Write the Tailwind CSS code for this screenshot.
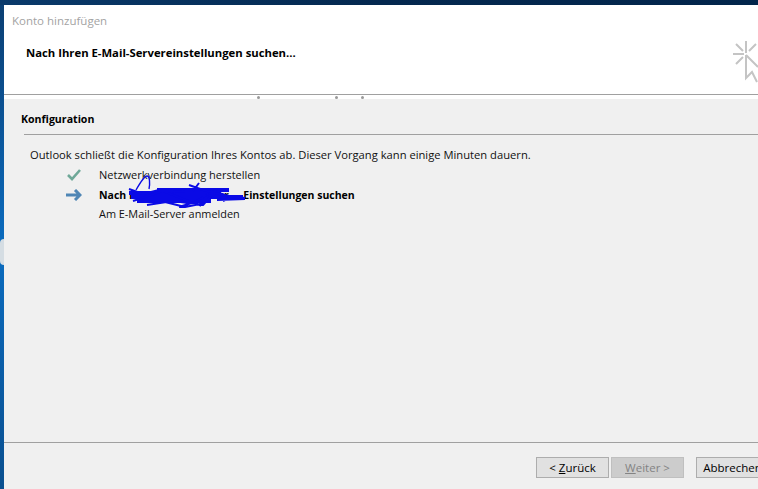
<!DOCTYPE html>
<html lang="de">
<head>
  <meta charset="UTF-8">
  <title>Konto hinzufügen</title>
  <script src="https://cdn.jsdelivr.net/npm/@tailwindcss/browser@4"></script>
</head>
<body class="w-[758px] h-[489px] overflow-hidden font-['Open_Sans','Noto_Sans',sans-serif] text-[11px] text-[#111] bg-[#0a6cc0]">
  <div class="h-[5px] bg-gradient-to-r from-[#0a3a6b] via-[#04284f] to-[#02254b]"></div>

  <div class="flex h-[484px]">
    <!-- desktop behind the window -->
    <div class="relative w-[4px] shrink-0 bg-gradient-to-b from-[#0b3f73] via-[#0a6cc0] to-[#0a4f8f]">
      <div class="absolute left-0 top-[234px] w-[4px] h-[26px] rounded-l-full bg-[#d5dde3]"></div>
    </div>

    <div class="w-[754px] flex flex-col">
      <!-- header -->
      <div class="relative h-[89px] bg-white">
        <div class="pl-[8px] pt-[9px] text-[11.5px] leading-[14px] text-[#a3a3a3]">Konto hinzufügen</div>
        <div class="pl-[22px] pt-[18px] text-[11.3px] leading-[14px] font-bold text-black">Nach Ihren E-Mail-Servereinstellungen suchen...</div>
        <svg class="absolute left-[728px] top-[36px]" width="26" height="48" viewBox="0 0 26 48" fill="none" stroke="#c4c4c4" stroke-width="2">
          <path d="M14 0v12M1 13h11M4 3l7 7M24 3l-7 7M4 23l7-7"/>
          <path d="M14 14v23l6-6 5 10M14 14l12 12" />
        </svg>
      </div>
      <div class="relative h-[5px] bg-white">
        <div class="h-[1px] bg-[#a0a0a0]"></div>
        <div class="absolute left-[253px] top-[2px] w-[3px] h-[3px] rounded-full bg-[#999]"></div>
        <div class="absolute left-[331px] top-[2px] w-[3px] h-[3px] rounded-full bg-[#999]"></div>
        <div class="absolute left-[357px] top-[2px] w-[3px] h-[3px] rounded-full bg-[#999]"></div>
      </div>

      <!-- content -->
      <div class="flex-1 bg-[#f0f0f0] flex flex-col">
        <div class="pl-[17px] pt-[13px] text-[10.6px] leading-[14px] font-bold text-black">Konfiguration</div>
        <div class="ml-[20px] mt-[8px] h-[1px] bg-[#a0a0a0]"></div>

        <div class="pl-[26px] pt-[13px] text-[11.2px] leading-[14px]">Outlook schließt die Konfiguration Ihres Kontos ab. Dieser Vorgang kann einige Minuten dauern.</div>

        <div class="relative mt-[3px] flex flex-col">
          <div class="flex items-center h-[20px]">
            <div class="w-[77px] shrink-0 flex justify-end">
              <svg width="14" height="12" viewBox="0 0 14 12" fill="none" stroke="#6fa898" stroke-width="2.6"><path d="M1 6l4 4 8-9"/></svg>
            </div>
            <div class="pl-[18px] leading-[14px]">Netzwerkverbindung herstellen</div>
          </div>
          <div class="flex items-center h-[19px]">
            <div class="w-[78px] shrink-0 flex justify-end">
              <svg width="16" height="12" viewBox="0 0 16 12" fill="none" stroke="#4f86b5" stroke-width="3"><path d="M0 6h13M9 1l5 5-5 5"/></svg>
            </div>
            <div class="pl-[17px] text-[10.5px] leading-[14px] font-bold text-black"><span class="pr-[11px]">Nach Ihren E-Mail-Server-</span>Einstellungen suchen</div>
          </div>
          <div class="flex items-center h-[19px]">
            <div class="w-[77px] shrink-0"></div>
            <div class="pl-[18px] text-[10.9px] leading-[14px]">Am E-Mail-Server anmelden</div>
          </div>
          <!-- blue scribble over the server name -->
          <svg class="absolute left-[123px] top-[8px]" width="124" height="38" viewBox="0 0 124 38" fill="none" stroke="#0a0ae6" stroke-width="2" stroke-linejoin="round">
            <path d="M9 17c4-7 8-14 11-14 3 0 3 8 2 13" stroke-width="1.4"/>
            <path d="M2 20h92M4 24h112M10 28h74M30 17h72"  stroke-width="4"/>
            <path d="M6 28l30-10 30 12 24-14-14 16-30-4-26 4M62 12l14 5 20 5 22 3M72 10l-6 8M38 29l20 5 20-4M52 34l16-5 6 4M2 16l14 5 16-4 26 2M90 27l28-1M92 20l12 4-8 4"/>
          </svg>
        </div>

        <div class="flex-1"></div>

        <!-- footer -->
        <div class="h-[1px] bg-[#a0a0a0]"></div>
        <div class="h-[46px] pt-[14px] pl-[532px] flex text-[11.5px] overflow-hidden">
          <button class="w-[73px] h-[21px] shrink-0 border border-[#adadad] bg-[#e1e1e1] leading-[18px] text-black">&lt; <span class="underline">Z</span>urück</button>
          <button class="ml-[2px] w-[73px] h-[21px] shrink-0 border border-[#bfbfbf] bg-[#cccccc] leading-[18px] text-[#838383]"><span class="underline">W</span>eiter &gt;</button>
          <button class="ml-[12px] w-[73px] h-[21px] shrink-0 border border-[#adadad] bg-[#e1e1e1] leading-[18px] text-black">Abbrechen</button>
        </div>
      </div>
    </div>
  </div>
</body>
</html>
